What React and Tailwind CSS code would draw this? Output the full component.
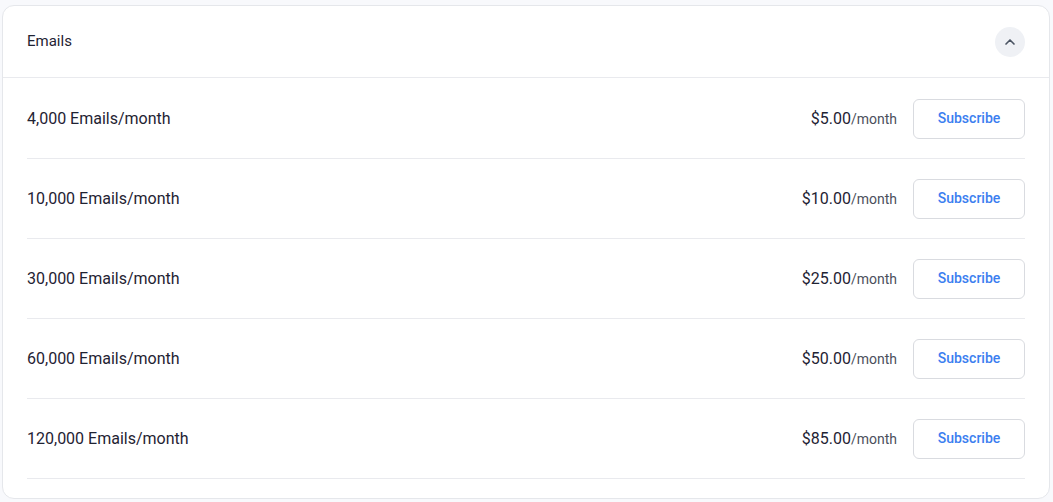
import { ChevronUp } from 'lucide-react';

const plans = [
    { label: '4,000 Emails/month', price: '$5.00' },
    { label: '10,000 Emails/month', price: '$10.00' },
    { label: '30,000 Emails/month', price: '$25.00' },
    { label: '60,000 Emails/month', price: '$50.00' },
    { label: '120,000 Emails/month', price: '$85.00' },
];

export default function App() {
    return (
        <div className="min-h-screen bg-[#f8f9fc] pt-[5px] pl-[2px] pr-[3px] pb-[4px] font-['Roboto',sans-serif]">
            <div className="bg-white border border-[#e5e7eb] rounded-xl">
                {/* Header */}
                <div className="h-[72px] flex items-center justify-between pl-6 pr-6 border-b border-[#e9eaee]">
                    <h3 className="text-[15px] text-[#1f2333]">Emails</h3>
                    <button className="w-[30px] h-[30px] rounded-full bg-[#eff1f5] flex items-center justify-center">
                        <ChevronUp size={16} strokeWidth={2.5} className="text-[#4b5563]" />
                    </button>
                </div>

                {/* Plans */}
                <div className="px-6 pt-px pb-[19px]">
                    {plans.map((plan) => (
                        <div
                            key={plan.label}
                            className="h-[80px] flex items-center justify-between border-b border-[#e9eaee]"
                        >
                            <span className="text-[16px] text-[#1f2333]">{plan.label}</span>
                            <div className="flex items-center gap-4">
                                <span className="text-[#1f2333]">
                                    <span className="text-[16px]">{plan.price}</span>
                                    <span className="text-[14px] text-[#4b4f5c]">/month</span>
                                </span>
                                <button className="w-[112px] h-[40px] rounded-md border border-[#d9dbe0] text-[14px] font-medium text-[#3b7ef0]">
                                    Subscribe
                                </button>
                            </div>
                        </div>
                    ))}
                </div>
            </div>
        </div>
    );
}
